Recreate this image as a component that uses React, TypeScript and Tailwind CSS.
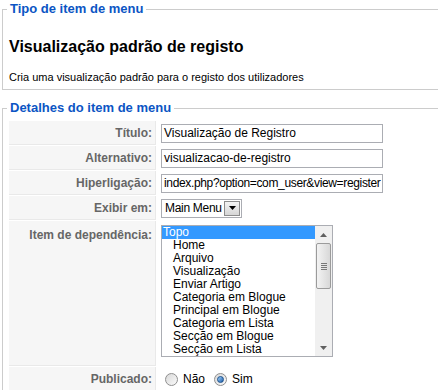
import React from 'react';

const SANS = "font-['Liberation_Sans',Arial,sans-serif]";

const PARENTS = [
  'Home',
  'Arquivo',
  'Visualização',
  'Enviar Artigo',
  'Categoria em Blogue',
  'Principal em Blogue',
  'Categoria em Lista',
  'Secção em Blogue',
  'Secção em Lista',
];

function KeyCell({ children, top }: { children: React.ReactNode; top?: boolean }) {
  return (
    <div
      className={`w-[147px] shrink-0 whitespace-nowrap border-b border-r border-[#e9e9e9] bg-[#f6f6f6] pr-[3px] text-right text-[12px] font-bold text-[#666] ${
        top ? 'pt-[5px]' : 'flex items-center justify-end'
      }`}
    >
      {children}
    </div>
  );
}

function TextInput({ value, tight }: { value: string; tight?: boolean }) {
  return (
    <div
      className={`flex h-[19px] w-[222px] items-center overflow-hidden whitespace-nowrap border border-[#abadb3] bg-white px-[2px] text-[12px] text-black ${
        tight ? 'tracking-[-0.35px]' : ''
      }`}
    >
      {value}
    </div>
  );
}

function Radio({ checked }: { checked?: boolean }) {
  return (
    <span className="flex h-[13px] w-[13px] items-center justify-center rounded-full border border-[#8f8f8f] bg-gradient-to-br from-[#d9d9d9] to-[#fafafa]">
      {checked && (
        <span className="h-[7px] w-[7px] rounded-full border border-[#1a4f8a] bg-gradient-to-br from-[#9fd3ff] to-[#1f5fa8]" />
      )}
    </span>
  );
}

function ListBox() {
  return (
    <div className="flex h-[132px] w-[172px] border border-[#abadb3] bg-white">
      <ul className="flex-1 whitespace-nowrap text-[12px] leading-[13px] text-black">
        <li className="bg-[#3399ff] pl-[1px] text-white">Topo</li>
        {PARENTS.map((p) => (
          <li key={p} className="pl-[11px]">
            {p}
          </li>
        ))}
      </ul>
      <div className="flex w-[17px] flex-col bg-[#f0f0f0]">
        <div className="flex h-[17px] items-center justify-center">
          <svg width="7" height="4" viewBox="0 0 7 4">
            <path d="M0 4 L3.5 0 L7 4 Z" fill="#606060" />
          </svg>
        </div>
        <div className="mx-[1px] flex h-[46px] flex-col items-center justify-center gap-[1px] rounded-[2px] border border-[#9b9b9b] bg-gradient-to-r from-[#f3f3f3] to-[#d8d8d8]">
          <span className="h-[1px] w-[6px] bg-[#777]" />
          <span className="h-[1px] w-[6px] bg-[#777]" />
          <span className="h-[1px] w-[6px] bg-[#777]" />
          <span className="h-[1px] w-[6px] bg-[#777]" />
        </div>
        <div className="flex-1" />
        <div className="flex h-[17px] items-center justify-center">
          <svg width="7" height="4" viewBox="0 0 7 4">
            <path d="M0 0 L3.5 4 L7 0 Z" fill="#606060" />
          </svg>
        </div>
      </div>
    </div>
  );
}

function Row({ label, children, top, height }: { label: string; children: React.ReactNode; top?: boolean; height: string }) {
  return (
    <div className={`flex ${height}`}>
      <KeyCell top={top}>{label}</KeyCell>
      <div className={`flex pl-[5px] ${top ? 'items-start pt-[4px]' : 'items-center'}`}>{children}</div>
    </div>
  );
}

export default function App() {
  return (
    <div className={`h-[390px] w-[438px] overflow-hidden bg-white ${SANS}`}>
      <fieldset className="ml-[2px] w-[480px] border border-[#cccccc] px-[6px] pb-[5px]">
        <legend className="ml-[-2px] px-[3px] text-[13px] font-bold leading-[18px] text-[#0b55c4]">
          Tipo de item de menu
        </legend>
        <h2 className="mt-[19px] whitespace-nowrap text-[16px] font-bold leading-[20px] text-black">
          Visualização padrão de registo
        </h2>
        <p className="mt-[13px] whitespace-nowrap text-[11px] leading-[14px] text-black">
          Cria uma visualização padrão para o registo dos utilizadores
        </p>
      </fieldset>

      <fieldset className="ml-[2px] mt-[9px] w-[480px] border border-[#cccccc] px-[6px] pb-[10px]">
        <legend className="ml-[-2px] px-[3px] text-[13px] font-bold leading-[18px] text-[#0b55c4]">
          Detalhes do item de menu
        </legend>
        <div className="mt-[4px] flex flex-col gap-[1px]">
          <Row label="Título:" height="h-[24px]">
            <TextInput value="Visualização de Registro" />
          </Row>
          <Row label="Alternativo:" height="h-[24px]">
            <TextInput value="visualizacao-de-registro" />
          </Row>
          <Row label="Hiperligação:" height="h-[24px]">
            <TextInput value="index.php?option=com_user&view=register" tight />
          </Row>
          <Row label="Exibir em:" height="h-[24px]">
            <div className="flex h-[19px] w-[81px] items-center justify-between whitespace-nowrap border border-[#abadb3] bg-white pl-[3px] pr-[1px] text-[12px] tracking-[-0.3px] text-black">
              <span>Main Menu</span>
              <span className="flex h-[15px] w-[16px] items-center justify-center border border-[#8d8d8d] bg-gradient-to-b from-[#f4f4f4] to-[#d6d6d6]">
                <svg width="7" height="4" viewBox="0 0 7 4">
                  <path d="M0 0 L3.5 4 L7 0 Z" fill="#000" />
                </svg>
              </span>
            </div>
          </Row>
          <Row label="Item de dependência:" top height="h-[145px]">
            <ListBox />
          </Row>
          <Row label="Publicado:" height="h-[24px]">
            <div className="flex items-center whitespace-nowrap pl-[4px] text-[12px] text-black">
              <Radio />
              <span className="ml-[5px]">Não</span>
              <span className="ml-[9px]">
                <Radio checked />
              </span>
              <span className="ml-[5px]">Sim</span>
            </div>
          </Row>
        </div>
      </fieldset>
    </div>
  );
}
